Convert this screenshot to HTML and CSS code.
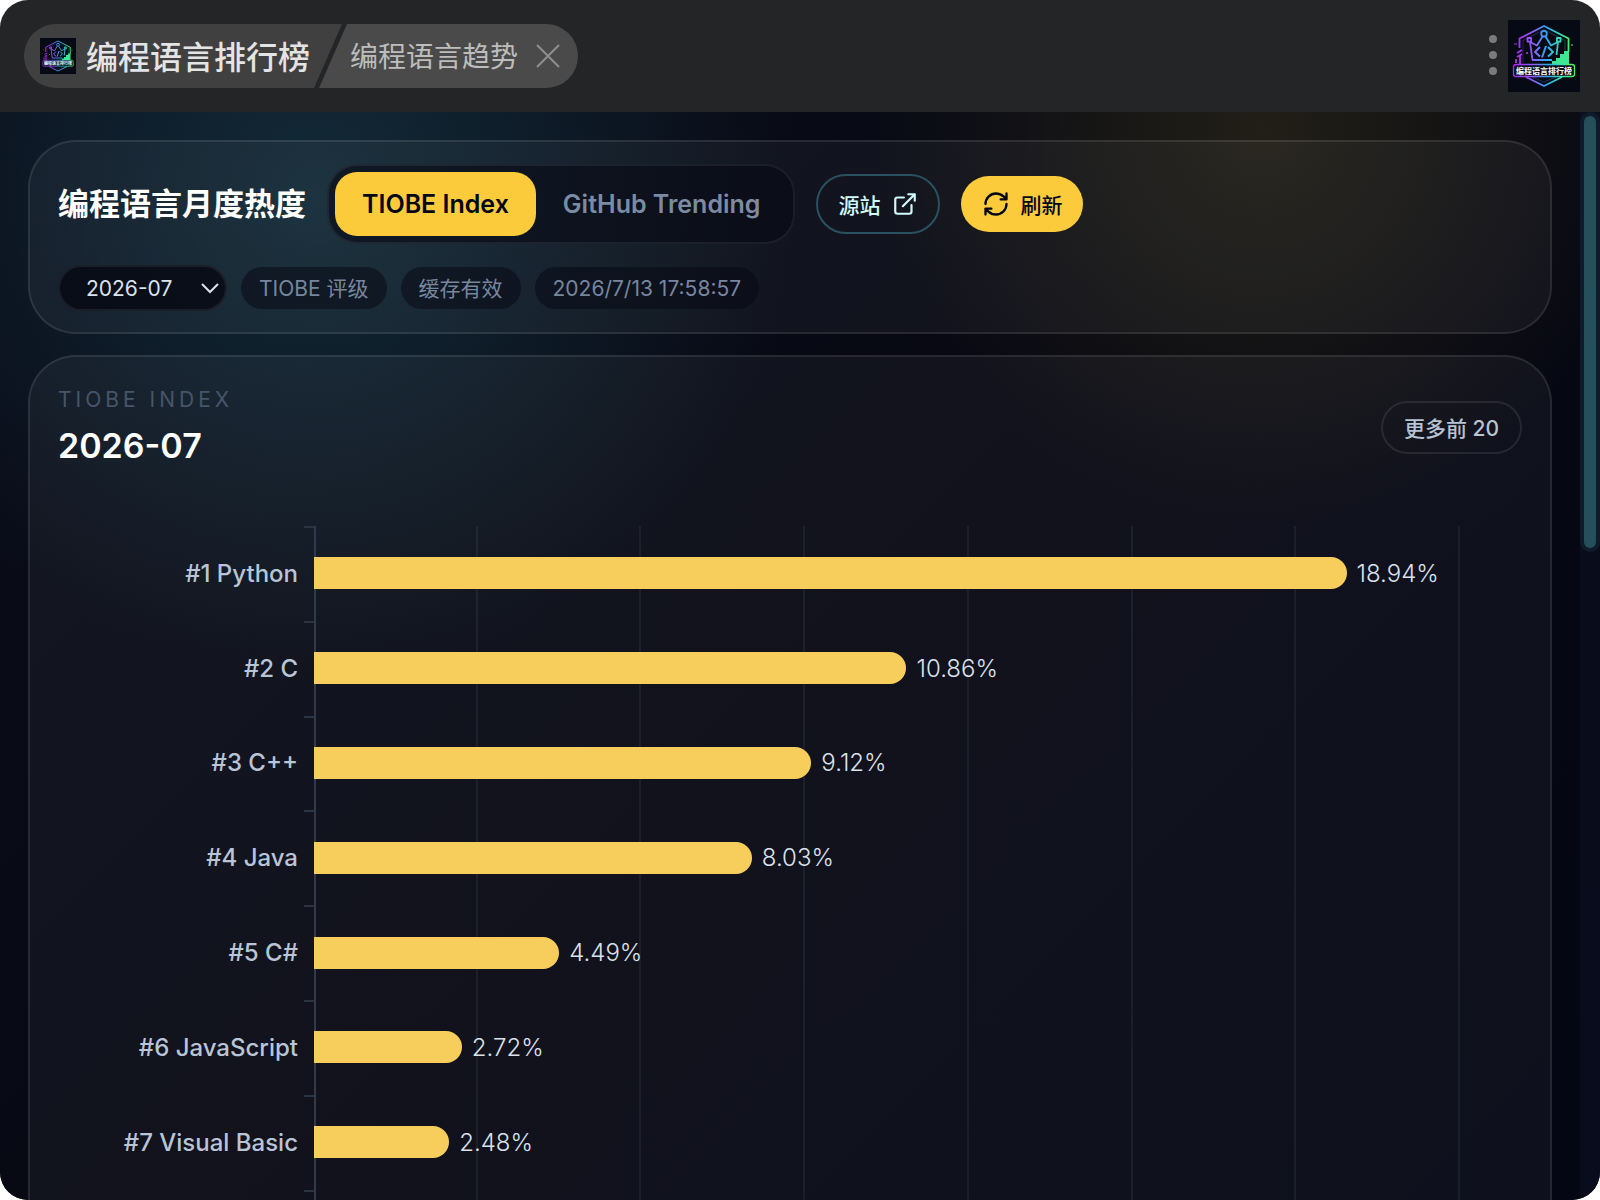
FILE: index.html
```html
<!DOCTYPE html>
<html lang="zh-CN">
<head>
    <meta charset="UTF-8">
    <meta name="viewport" content="width=device-width, initial-scale=1.0">
    <title>编程语言排行榜</title>
    <link rel="stylesheet" href="styles.css">
</head>
<body>
    <svg class="sprite" aria-hidden="true">
        <defs>
            <linearGradient id="neon" gradientUnits="userSpaceOnUse" x1="8" y1="0" x2="64" y2="0">
                <stop offset="0" stop-color="#b02bf8"/>
                <stop offset="0.3" stop-color="#8f5cf8"/>
                <stop offset="0.55" stop-color="#2fa8f5"/>
                <stop offset="0.8" stop-color="#35e0b0"/>
                <stop offset="1" stop-color="#4df55a"/>
            </linearGradient>
        </defs>
        <symbol id="logo" viewBox="0 0 72 72">
            <rect width="72" height="72" fill="#060a14"/>
            <g fill="none" stroke="url(#neon)" stroke-width="1.8" stroke-linejoin="round">
                <path d="M11.500 28V18.500L36 6l24.500 12.500V32M12 36v8M18 57l18 9 18-9"/>
                <path d="M15 43V20.500L36 9.500l21 11v10M24 57l12 5 12-5" stroke-width="0.6" opacity="0.5"/>
                <path d="M9 33l5-3M9 37l5-3M8 43v-4"/>
                <path d="M6 24h3M63 25h2M18 33h2M19 32v2" stroke-width="1"/>
                <path d="M24 40h20M24.500 40L22 22l7 3.500 5.500-9M37.500 16.500l5.500 9 7-3.500L48.500 35"/>
                <circle cx="36" cy="13.700" r="2.800"/>
                <rect x="19.500" y="18" width="3.600" height="3.600"/>
                <rect x="48.900" y="18" width="3.600" height="3.600"/>
                <path d="M32 27l-5 5 5 4.500M40 27l5 5-5 4.500M38 26l-4 11.500" stroke-width="2"/>
            </g>
            <path d="M44 44v-3h4v-3h4v-4h4v-3h5v13z" fill="#3ce894"/>
            <rect x="5.500" y="44.500" width="61" height="12" rx="2.500" fill="#0a0d1c" stroke="url(#neon)" stroke-width="1.3"/>
            <text x="36" y="53.500" text-anchor="middle" class="logo-text">编程语言排行榜</text>
        </symbol>
    </svg>

    <div class="window">
        <header class="titlebar">
            <nav class="crumbs">
                <a class="crumb crumb-app" href="#">
                    <svg class="crumb-logo"><use href="#logo"/></svg>
                    <span>编程语言排行榜</span>
                </a>
                <div class="crumb crumb-page">
                    <span>编程语言趋势</span>
                    <button class="close" type="button" aria-label="关闭">
                        <svg width="24" height="24" viewBox="0 0 24 24"><path d="M1 1l22 22M23 1L1 23"/></svg>
                    </button>
                </div>
            </nav>
            <div class="titlebar-right">
                <button class="more" type="button" aria-label="更多"><i></i><i></i><i></i></button>
                <svg class="app-logo"><use href="#logo"/></svg>
            </div>
        </header>

        <div class="viewport">
            <main class="content">
                <section class="card toolbar">
                    <div class="toolbar-row">
                        <h1>编程语言月度热度</h1>
                        <div class="tabs">
                            <button class="tab active" type="button">TIOBE Index</button>
                            <button class="tab" type="button">GitHub Trending</button>
                        </div>
                        <a class="btn btn-outline" href="#">
                            源站
                            <svg class="icon" width="26" height="26" viewBox="0 0 24 24"><path d="M15 3h6v6M10 14L21 3M18 13v6a2 2 0 0 1-2 2H5a2 2 0 0 1-2-2V8a2 2 0 0 1 2-2h6"/></svg>
                        </a>
                        <button class="btn btn-primary" type="button">
                            <svg class="icon" width="28" height="28" viewBox="0 0 24 24"><path d="M3 12a9 9 0 0 1 9-9 9.750 9.750 0 0 1 6.740 2.740L21 8M21 3v5h-5M21 12a9 9 0 0 1-9 9 9.750 9.750 0 0 1-6.740-2.740L3 16M8 16H3v5"/></svg>
                            刷新
                        </button>
                    </div>
                    <div class="meta-row">
                        <div class="month">
                            <select aria-label="月份">
                                <option>2026-07</option>
                            </select>
                            <svg class="chevron" width="18" height="11" viewBox="0 0 18 11"><path d="M1 1l8 8 8-8"/></svg>
                        </div>
                        <span class="pill">TIOBE 评级</span>
                        <span class="pill">缓存有效</span>
                        <span class="pill">2026/7/13 17:58:57</span>
                    </div>
                </section>

                <section class="card ranking">
                    <div class="ranking-head">
                        <div>
                            <p class="eyebrow">TIOBE INDEX</p>
                            <h2>2026-07</h2>
                        </div>
                        <button class="btn btn-ghost" type="button">更多前 20</button>
                    </div>
                    <div class="chart">
                        <div class="labels">
                            <span>#1 Python</span>
                            <span>#2 C</span>
                            <span>#3 C++</span>
                            <span>#4 Java</span>
                            <span>#5 C#</span>
                            <span>#6 JavaScript</span>
                            <span>#7 Visual Basic</span>
                            <span></span>
                            <span></span>
                            <span></span>
                        </div>
                        <!-- 横轴 0-21%，每 3% 一条网格线 -->
                        <div class="plot">
                            <div class="row"><div class="bar" style="width: 90.1%"></div>18.94%</div>
                            <div class="row"><div class="bar" style="width: 51.7%"></div>10.86%</div>
                            <div class="row"><div class="bar" style="width: 43.4%"></div>9.12%</div>
                            <div class="row"><div class="bar" style="width: 38.2%"></div>8.03%</div>
                            <div class="row"><div class="bar" style="width: 21.4%"></div>4.49%</div>
                            <div class="row"><div class="bar" style="width: 12.9%"></div>2.72%</div>
                            <div class="row"><div class="bar" style="width: 11.8%"></div>2.48%</div>
                            <div class="row"></div>
                            <div class="row"></div>
                            <div class="row"></div>
                        </div>
                    </div>
                </section>
            </main>
            <div class="scrollbar"><div class="thumb"></div></div>
        </div>
    </div>
</body>
</html>
```

FILE: styles.css
```css
* {
    box-sizing: border-box;
}

body {
    margin: 0;
    background: #fff;
    font-family: Inter, "Noto Sans CJK SC", sans-serif;
    color: #fff;
}

button, select {
    font-family: inherit;
    cursor: pointer;
}

a {
    color: inherit;
    text-decoration: none;
}

h1, h2, p {
    margin: 0;
}

svg {
    display: block;
    flex-shrink: 0;
}

.sprite {
    position: absolute;
    width: 0;
    height: 0;
    overflow: visible;
}

.logo-text {
    font-family: "Noto Sans CJK SC", sans-serif;
    font-size: 8px;
    font-weight: 700;
    fill: #fff;
}

.window {
    display: flex;
    flex-direction: column;
    height: 100vh;
    border-radius: 28px;
    overflow: hidden;
    background: #242527;
}

/* Title bar */
.titlebar {
    display: flex;
    align-items: center;
    justify-content: space-between;
    flex-shrink: 0;
    height: 112px;
    padding: 0 20px 0 24px;
}

.crumbs {
    display: flex;
    height: 64px;
    border-radius: 32px;
    overflow: hidden;
}

.crumb {
    display: flex;
    align-items: center;
}

.crumb-app {
    gap: 10px;
    padding: 0 32px 0 16px;
    background: #404040;
    color: #e4e4e4;
    font-size: 32px;
    font-weight: 500;
    clip-path: polygon(0 0, 100% 0, calc(100% - 28px) 100%, 0 100%);
}

.crumb-page {
    gap: 18px;
    margin-left: -23px;
    padding: 0 18px 0 31px;
    background: #4a4a4a;
    color: #bdbdbd;
    font-size: 28px;
    clip-path: polygon(28px 0, 100% 0, 100% 100%, 0 100%);
}

.crumb span {
    padding-bottom: 3px;
}

.crumb-logo {
    width: 36px;
    height: 36px;
}

.close {
    padding: 0;
    border: none;
    background: none;
}

.close path {
    stroke: #8e8e8e;
    stroke-width: 2;
}

.titlebar-right {
    display: flex;
    align-items: center;
    gap: 11px;
}

.more {
    display: flex;
    flex-direction: column;
    gap: 8px;
    padding: 0 0 2px;
    border: none;
    background: none;
}

.more i {
    width: 8px;
    height: 8px;
    border-radius: 50%;
    background: #7b7b7b;
}

.app-logo {
    width: 72px;
    height: 72px;
}

/* Page */
.viewport {
    display: flex;
    flex: 1;
    min-height: 0;
    background:
        radial-gradient(circle at 20% 8%, rgba(40, 115, 130, 0.3), transparent 480px),
        radial-gradient(circle at 79% 2%, rgba(210, 185, 50, 0.13), transparent 390px),
        linear-gradient(135deg, #0a0d1a 0%, #070812 50%, #040613 100%);
}

.content {
    flex: 1;
    min-width: 0;
    padding: 28px 28px 0;
    overflow: hidden;
}

.card {
    border: 2px solid rgba(255, 255, 255, 0.09);
    border-radius: 48px;
    background: rgba(255, 255, 255, 0.045);
}

.toolbar {
    padding: 22px 28px 21px;
}

.toolbar-row {
    display: flex;
    align-items: center;
    gap: 21px;
}

h1 {
    font-size: 31px;
    line-height: 40px;
    font-weight: 600;
}

.tabs {
    display: flex;
    padding: 6px;
    border: 2px solid rgba(255, 255, 255, 0.07);
    border-radius: 30px;
    background: rgba(7, 9, 20, 0.6);
}

.tab {
    height: 64px;
    padding: 0 27px;
    border: none;
    border-radius: 22px;
    background: none;
    color: #7c8ba3;
    font-size: 25px;
    font-weight: 600;
}

.tab.active {
    background: #fbcb3c;
    color: #020617;
}

.btn {
    display: flex;
    align-items: center;
    gap: 12px;
    padding: 0 22px;
    border: none;
    border-radius: 30px;
    font-size: 21px;
    font-weight: 500;
}

.btn-outline {
    height: 60px;
    padding: 0 20px;
    border: 2px solid #2a515f;
    color: #cffafe;
}

.btn-primary {
    height: 56px;
    gap: 10px;
    padding: 0 21px;
    background: #fbcb3c;
    color: #020617;
}

.btn-ghost {
    height: 53px;
    padding: 0 21px;
    border: 2px solid rgba(255, 255, 255, 0.09);
    background: none;
    color: #b8c3d4;
}

.icon {
    fill: none;
    stroke: currentColor;
    stroke-width: 2;
    stroke-linecap: round;
    stroke-linejoin: round;
}

.meta-row {
    display: flex;
    align-items: center;
    gap: 14px;
    margin-top: 21px;
}

.month {
    position: relative;
}

.month select {
    appearance: none;
    width: 169px;
    height: 46px;
    padding: 0 26px;
    border: 2px solid rgba(255, 255, 255, 0.07);
    border-radius: 23px;
    background: rgba(7, 9, 20, 0.85);
    color: #dbe2ec;
    font-size: 21px;
}

.chevron {
    position: absolute;
    right: 8px;
    top: 18px;
    fill: none;
    stroke: #dbe2ec;
    stroke-width: 2;
    pointer-events: none;
}

.pill {
    padding: 2px 18px 0;
    border-radius: 21px;
    background: rgba(7, 9, 20, 0.55);
    color: #77869e;
    font-size: 21px;
    line-height: 40px;
}

/* Ranking */
.ranking {
    margin-top: 21px;
    padding: 28px;
}

.ranking-head {
    display: flex;
    align-items: center;
    justify-content: space-between;
}

.eyebrow {
    color: #475569;
    font-size: 21px;
    line-height: 30px;
    letter-spacing: 4px;
}

h2 {
    margin-top: 8px;
    font-size: 34px;
    line-height: 46px;
    font-weight: 600;
}

.chart {
    display: flex;
    height: 948px;
    margin-top: 57px;
    padding-right: 62px;
    font-size: 24px;
}

.labels, .plot {
    display: flex;
    flex-direction: column;
}

.labels {
    width: 256px;
    color: #b9c5d6;
    font-weight: 500;
}

.labels span {
    position: relative;
    display: flex;
    flex: 1;
    align-items: center;
    justify-content: flex-end;
    padding-right: 16px;
}

.labels span::after {
    content: "";
    position: absolute;
    top: 0;
    right: 0;
    width: 10px;
    height: 2px;
    background: #2b3443;
}

.plot {
    flex: 1;
    box-shadow: inset 2px 0 #2f3a4b;
    background: repeating-linear-gradient(to right, transparent 0 calc(100% / 7 - 2px), rgba(148, 163, 184, 0.09) calc(100% / 7 - 2px) calc(100% / 7));
}

.row {
    display: flex;
    flex: 1;
    align-items: center;
    gap: 10px;
    color: #dbe2ec;
    font-weight: 300;
}

.bar {
    flex-shrink: 0;
    height: 32px;
    border-radius: 0 16px 16px 0;
    background: #f7ce5b;
}

.scrollbar {
    width: 20px;
    background: rgba(15, 23, 42, 0.4);
}

.thumb {
    height: 40.4%;
    border: 4px solid #0f1b2a;
    border-radius: 10px;
    background: #264f5c;
}
```
